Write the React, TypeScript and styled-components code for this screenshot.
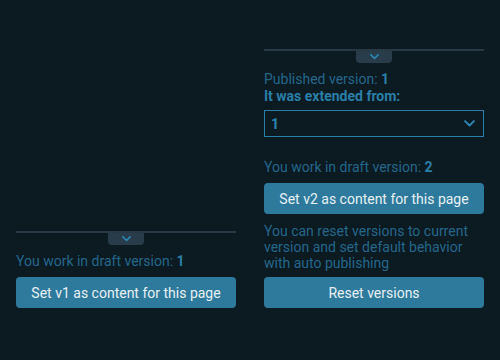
import React from 'react';
import styled, { createGlobalStyle } from 'styled-components';

const GlobalStyle = createGlobalStyle`
    html, body {
        margin: 0;
        padding: 0;
        background: #0c1a22;
    }
    body {
        font-family: Roboto, "Liberation Sans", sans-serif;
        font-size: 14px;
    }
`;

const Page = styled.div`
    width: 500px;
    height: 360px;
    box-sizing: border-box;
    padding: 0 16px 52px;
    display: flex;
    flex-flow: row nowrap;
    align-items: flex-end;
    gap: 28px;
`;

const Column = styled.div`
    width: 220px;
    display: flex;
    flex-flow: column nowrap;
`;

const Divider = styled.div`
    display: flex;
    flex-flow: column nowrap;
    align-items: center;
    border-top: 2px solid #263945;
`;

const Tab = styled.div`
    width: 36px;
    height: 12px;
    background: #283c4a;
    border-radius: 0 0 4px 4px;
    display: flex;
    align-items: center;
    justify-content: center;
    color: #2b86b3;
`;

const Label = styled.div<{ $gap?: number }>`
    margin-top: ${p => p.$gap ?? 0}px;
    color: #24678a;
    line-height: 16px;
`;

const Value = styled.b`
    color: #2a7fa8;
`;

const Heading = styled.div`
    margin-top: 1px;
    color: #2a7fa8;
    font-weight: bold;
    line-height: 16px;
`;

const Select = styled.div`
    margin-top: 6px;
    height: 27px;
    box-sizing: border-box;
    border: 1px solid #2a7fa8;
    padding: 0 8px 0 6px;
    display: flex;
    align-items: center;
    justify-content: space-between;
    color: #2b86b3;
    font-weight: bold;
`;

const Button = styled.button<{ $gap?: number }>`
    margin-top: ${p => p.$gap ?? 0}px;
    height: 31px;
    width: 100%;
    border: none;
    border-radius: 4px;
    background: #2d7a9c;
    color: #e8f0f4;
    font-family: Roboto, "Liberation Sans", sans-serif;
    font-size: 14px;
    padding: 0;
`;

const Chevron = ({ size = 10 }: { size?: number }) => (
    <svg width={size} height={size * 0.6} viewBox="0 0 10 6" fill="none">
        <path d="M1 1l4 4 4-4" stroke="currentColor" strokeWidth="1.8" strokeLinecap="round" strokeLinejoin="round"/>
    </svg>
);

const Collapse = () => (
    <Divider>
        <Tab><Chevron size={9}/></Tab>
    </Divider>
);

const App = () => (
    <>
        <GlobalStyle/>
        <Page>
            <Column>
                <Collapse/>
                <Label $gap={8}>You work in draft version: <Value>1</Value></Label>
                <Button $gap={8}>Set v1 as content for this page</Button>
            </Column>
            <Column>
                <Collapse/>
                <Label $gap={8}>Published version: <Value>1</Value></Label>
                <Heading>It was extended from:</Heading>
                <Select>
                    <span>1</span>
                    <Chevron size={11}/>
                </Select>
                <Label $gap={22}>You work in draft version: <Value>2</Value></Label>
                <Button $gap={8}>Set v2 as content for this page</Button>
                <Label $gap={9}>You can reset versions to current version and set default behavior with auto publishing</Label>
                <Button $gap={6}>Reset versions</Button>
            </Column>
        </Page>
    </>
);

export default App;
